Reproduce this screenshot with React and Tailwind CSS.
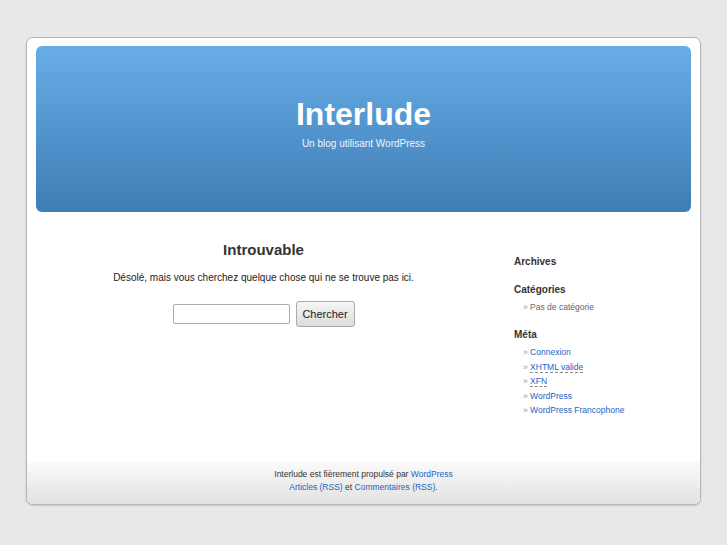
export default function App() {
  const meta = [
    { label: 'Connexion' },
    { label: 'XHTML valide', abbr: true },
    { label: 'XFN', abbr: true },
    { label: 'WordPress' },
    { label: 'WordPress Francophone' },
  ]

  return (
    <div className="min-h-[545px] bg-[#e8e8e8] pt-[37px] font-['Liberation_Sans',Arial,sans-serif] text-[#333]">
      <div className="mx-auto w-[675px] rounded-[7px] border border-[#b5b5b5] bg-white shadow-[0_1px_2px_rgba(0,0,0,0.15)]">
        <div className="px-[9px] pt-[8px]">
          <header className="flex h-[166px] flex-col items-center rounded-[6px] bg-gradient-to-b from-[#68ade8] to-[#3e7db5] pt-[51px]">
            <h1 className="text-[32px] font-bold leading-[35px] text-white">Interlude</h1>
            <p className="mt-[6px] text-[10px] leading-[12px] text-[#eef4fb]">Un blog utilisant WordPress</p>
          </header>
        </div>

        <div className="flex h-[250px]">
          <main className="flex w-[454px] flex-col items-center pl-[19px] pt-[29px]">
            <h2 className="text-[15px] font-bold leading-[18px] text-[#333]">Introuvable</h2>
            <p className="mt-[13px] text-[10px] leading-[12px] text-[#222]">
              Désolé, mais vous cherchez quelque chose qui ne se trouve pas ici.
            </p>
            <form className="mt-[17px] flex items-center gap-[6px]">
              <input
                type="text"
                className="h-[20px] w-[117px] rounded-[2px] border border-[#aaa] bg-white"
              />
              <button
                type="button"
                className="h-[26px] w-[59px] rounded-[3px] border border-[#aaa] bg-gradient-to-b from-[#f6f6f6] to-[#dcdcdc] text-[11px] text-[#222]"
              >
                Chercher
              </button>
            </form>
          </main>

          <aside className="ml-[33px] pt-[44px] text-[8.5px] leading-[11px]">
            <h3 className="text-[10px] font-bold leading-[12px] text-[#333]">Archives</h3>
            <h3 className="mt-[16px] text-[10px] font-bold leading-[12px] text-[#333]">Catégories</h3>
            <ul className="mt-[6px] pl-[9px] text-[#666]">
              <li>
                <span className="text-[#999]">» </span>Pas de catégorie
              </li>
            </ul>
            <h3 className="mt-[16px] text-[10px] font-bold leading-[12px] text-[#333]">Méta</h3>
            <ul className="mt-[6px] flex flex-col gap-[3.5px] pl-[9px]">
              {meta.map((m) => (
                <li key={m.label}>
                  <span className="text-[#999]">» </span>
                  <a
                    href="#"
                    className={`text-[#1d64c5] ${m.abbr ? 'border-b border-dashed border-[#888]' : ''}`}
                  >
                    {m.label}
                  </a>
                </li>
              ))}
            </ul>
          </aside>
        </div>

        <footer className="flex h-[42px] flex-col items-center rounded-b-[7px] bg-gradient-to-b from-[#fafafa] to-[#e2e2e2] pt-[6px] text-[8.5px] leading-[13px] text-[#333]">
          <p>
            Interlude est fièrement propulsé par <a href="#" className="text-[#1d64c5]">WordPress</a>
          </p>
          <p>
            <a href="#" className="text-[#1d64c5]">Articles (RSS)</a> et{' '}
            <a href="#" className="text-[#1d64c5]">Commentaires (RSS)</a>.
          </p>
        </footer>
      </div>
    </div>
  )
}
